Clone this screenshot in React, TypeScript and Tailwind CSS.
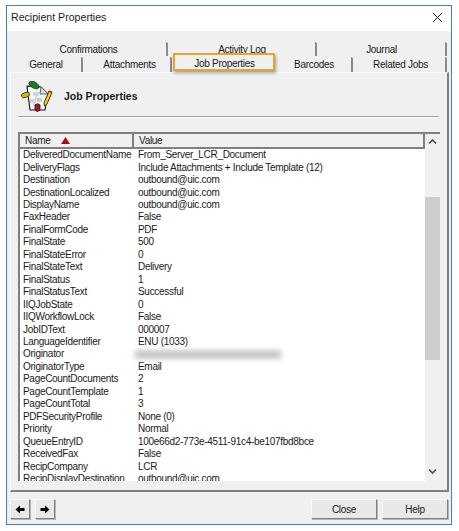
import React from 'react';

const rows: [string, string][] = [
  ['DeliveredDocumentName', 'From_Server_LCR_Document'],
  ['DeliveryFlags', 'Include Attachments + Include Template (12)'],
  ['Destination', 'outbound@uic.com'],
  ['DestinationLocalized', 'outbound@uic.com'],
  ['DisplayName', 'outbound@uic.com'],
  ['FaxHeader', 'False'],
  ['FinalFormCode', 'PDF'],
  ['FinalState', '500'],
  ['FinalStateError', '0'],
  ['FinalStateText', 'Delivery'],
  ['FinalStatus', '1'],
  ['FinalStatusText', 'Successful'],
  ['IIQJobState', '0'],
  ['IIQWorkflowLock', 'False'],
  ['JobIDText', '000007'],
  ['LanguageIdentifier', 'ENU (1033)'],
  ['Originator', ''],
  ['OriginatorType', 'Email'],
  ['PageCountDocuments', '2'],
  ['PageCountTemplate', '1'],
  ['PageCountTotal', '3'],
  ['PDFSecurityProfile', 'None (0)'],
  ['Priority', 'Normal'],
  ['QueueEntryID', '100e66d2-773e-4511-91c4-be107fbd8bce'],
  ['ReceivedFax', 'False'],
  ['RecipCompany', 'LCR'],
  ['RecipDisplayDestination', 'outbound@uic.com'],
];

const Tab: React.FC<{ label: string; width: string; clip?: boolean; selected?: boolean }> = ({ label, width, clip, selected }) => (
  <div
    className={`${width} ${clip ? 'h-[14px]' : 'h-[15px]'} shrink-0 flex items-center justify-center bg-[#f0f0f0] rounded-t-[2px] overflow-hidden ${
      selected ? 'pb-[2px]' : 'border-r-2 border-[#8a8a8a]'
    }`}
  >
    {label}
  </div>
);

const JobIcon = () => (
  <svg width="32" height="32" viewBox="0 0 32 32" className="shrink-0">
    <path d="M6 5 L20 6 L27 13 L24 29 L9 29 Z" fill="#f6f6f6" stroke="#111" strokeWidth="1.1" />
    <path d="M20 6 L19 13 L27 13" fill="#dcdcdc" stroke="#333" strokeWidth="0.7" />
    <rect x="12" y="11" width="6" height="4" fill="#d4d4d4" />
    <rect x="9" y="18" width="6" height="4" fill="#d4d4d4" />
    <rect x="16" y="17" width="5" height="4" fill="#cccccc" />
    <path d="M15 15 V18 M13 22 V25" stroke="#c4c4c4" strokeWidth="1" />
    <ellipse cx="13" cy="4" rx="5.5" ry="3" fill="#1c7a2c" stroke="#0b3a12" strokeWidth="0.8" transform="rotate(30 13 4)" />
    <ellipse cx="4.5" cy="14" rx="4.3" ry="2.5" fill="#c6ba1c" stroke="#3b3a08" strokeWidth="0.8" transform="rotate(-18 4.5 14)" />
    <path d="M14 24 Q16.5 21.5 19 24 L19 29 Q16.5 32 14 29 Z" fill="#a3182a" stroke="#400910" strokeWidth="0.8" />
    <path d="M23 22 L28 10 L31 11.5 L26 23 L23.5 25 Z" fill="#f0d020" stroke="#222" strokeWidth="0.9" />
    <path d="M28 10 L31 11.5" stroke="#c4281c" strokeWidth="1.6" />
  </svg>
);

const Chevron: React.FC<{ down?: boolean }> = ({ down }) => (
  <svg width="9" height="7" viewBox="0 0 9 7" className={down ? 'rotate-180' : ''}>
    <path d="M1 5.5 L4.5 2 L8 5.5" fill="none" stroke="#505050" strokeWidth="1.7" />
  </svg>
);

const Arrow: React.FC<{ right?: boolean }> = ({ right }) => (
  <svg width="10" height="9" viewBox="0 0 10 9" className={right ? 'rotate-180' : ''}>
    <path d="M0.5 4.5 L5 0.5 V3 H9.5 V6 H5 V8.5 Z" fill="#000" />
  </svg>
);

const btn = 'flex items-center justify-center bg-[#e8e8e8] border border-[#f8f8f8] border-r-[#808080] border-b-[#808080] shadow-[1px_1px_0_#b4b4b4]';

export default function App() {
  return (
    <div className="w-[459px] h-[531px] bg-white pt-[5px] pl-[6px] overflow-hidden font-['Liberation_Sans',Arial,sans-serif] text-[10px] tracking-[-0.3px] text-[#1a1a1a]">
      <div className="w-[446px] h-[520px] border border-[#3f7fcf] bg-[#f0f0f0] flex flex-col relative">
        <div className="h-[25px] shrink-0 bg-white flex items-center justify-between pl-[4px] pr-[8px] pb-[2px] text-[10.6px] tracking-normal">
          <span>Recipient Properties</span>
          <svg width="11" height="11" viewBox="0 0 11 11">
            <path d="M1 1 L10 10 M10 1 L1 10" stroke="#222" strokeWidth="1" fill="none" />
          </svg>
        </div>

        <div className="pl-[4px] pt-[11px] flex flex-col">
          <div className="flex gap-[1px]">
            <Tab label="Confirmations" width="w-[157px]" clip />
            <Tab label="Activity Log" width="w-[148px]" clip />
            <Tab label="Journal" width="w-[129px]" clip />
          </div>
          <div className="flex gap-[1px] mt-[1px]">
            <Tab label="General" width="w-[72px]" />
            <Tab label="Attachments" width="w-[88px] pl-[5px]" />
            <Tab label="Job Properties" width="w-[103px]" selected />
            <Tab label="Barcodes" width="w-[76px]" />
            <Tab label="Related Jobs" width="w-[93px] pl-[2px]" />
          </div>
        </div>

        {/* highlight round the selected tab */}
        <div className="absolute left-[166px] top-[47px] w-[102px] h-[18px] border-[2px] border-[#e8a52c] shadow-[1px_2px_3px_rgba(0,0,0,0.35)]" />

        <div className="ml-[3px] w-[439px] h-[420px] shrink-0 border-t border-t-[#fafafa] border-l border-l-[#fafafa] border-r-2 border-r-[#808080] border-b-2 border-b-[#808080] px-[7px] flex flex-col">
          <div className="h-[42px] shrink-0 flex items-center pl-[3px] pt-[6px] gap-[11px]">
            <JobIcon />
            <span className="font-bold text-[10.5px] tracking-normal">Job Properties</span>
          </div>
          <div className="h-[1px] mt-[1px] shrink-0 bg-[#a0a0a0] border-b border-white box-content mr-[1px]" />
          <div className="mt-[14px] h-[349px] shrink-0 border-t-2 border-t-[#808080] border-l-2 border-l-[#808080] flex bg-white overflow-hidden">
            <div className="flex-1 min-w-0 flex flex-col">
              <div className="h-[15px] shrink-0 flex bg-[#f0f0f0] border-b-2 border-[#808080]">
                <div className="w-[114px] shrink-0 border-r-2 border-[#808080] pl-[5px] flex items-center">
                  <span>Name</span>
                  <svg width="9" height="7" viewBox="0 0 9 7" className="ml-[11px]">
                    <path d="M4.5 0 L9 7 H0 Z" fill="#9c1414" />
                  </svg>
                </div>
                <div className="flex-1 border-r-2 border-[#808080] pl-[5px] flex items-center">Value</div>
              </div>
              <div className="flex flex-col overflow-hidden">
                {rows.map(([name, value]) => (
                  <div key={name} className="h-[12.46px] shrink-0 flex items-center leading-none whitespace-nowrap">
                    <div className="w-[115px] shrink-0 pl-[3px]">{name}</div>
                    <div className="pl-[3px]">
                      {name === 'Originator' ? (
                        <div className="w-[146px] h-[9px] ml-[-3px] bg-[#c8c8c8] blur-[2.5px]" />
                      ) : (
                        value
                      )}
                    </div>
                  </div>
                ))}
              </div>
            </div>
            <div className="w-[15px] shrink-0 bg-[#f0f0f0] flex flex-col items-center">
              <div className="h-[15px] shrink-0 flex items-center justify-center">
                <Chevron />
              </div>
              <div className="h-[48px] shrink-0" />
              <div className="w-full h-[163px] shrink-0 bg-[#cdcdcd]" />
              <div className="flex-1" />
              <div className="h-[17px] shrink-0 flex items-center justify-center mb-[1px]">
                <Chevron down />
              </div>
            </div>
          </div>
        </div>

        <div className="flex items-start pl-[3px] pt-[7px]">
          <div className={`${btn} w-[20px] h-[20px]`}><Arrow /></div>
          <div className={`${btn} w-[20px] h-[20px] ml-[5px]`}><Arrow right /></div>
          <div className={`${btn} w-[66px] h-[20px] ml-[256px]`}>Close</div>
          <div className={`${btn} w-[66px] h-[20px] ml-[5px]`}>Help</div>
        </div>
      </div>
    </div>
  );
}
